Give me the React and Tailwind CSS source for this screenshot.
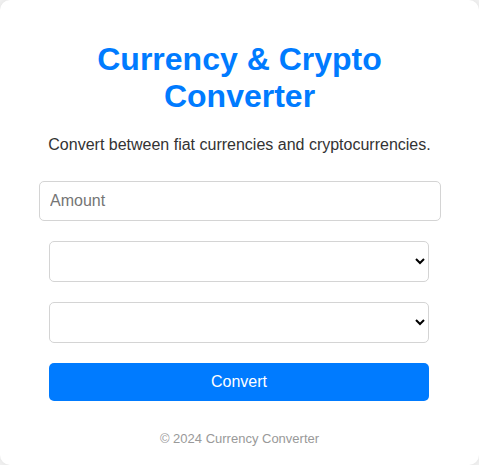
import React from "react";

export default function App() {
  return (
    <div
      className="min-h-[465px] bg-[#f4f4f4] text-[#333]"
      style={{ fontFamily: '"Liberation Sans", Arial, sans-serif' }}
    >
      <div className="h-[465px] w-[479px] rounded-[10px] bg-white px-5 pt-5 text-center shadow-[0_0_10px_rgba(0,0,0,0.1)]">
        <h1 className="mt-[21px] text-[32px] font-bold leading-[36.8px] text-[#007bff]">
          Currency &amp; Crypto
          <br />
          Converter
        </h1>
        <p className="mt-[21px] text-[16px] leading-[18.4px]">
          Convert between fiat currencies and cryptocurrencies.
        </p>
        <input
          type="number"
          placeholder="Amount"
          className="ml-[19px] mt-[27px] block h-10 w-[402px] rounded-[5px] border border-[#d4d4d4] bg-white px-[10px] text-[16px] text-[#333] outline-none placeholder:text-[#757575]"
        />
        <select className="ml-[29px] mt-5 block h-[41px] w-[380px] rounded-[5px] border border-[#d4d4d4] bg-white px-[10px] text-[16px] text-black">
          <option value=""></option>
        </select>
        <select className="ml-[29px] mt-5 block h-[41px] w-[380px] rounded-[5px] border border-[#d4d4d4] bg-white px-[10px] text-[16px] text-black">
          <option value=""></option>
        </select>
        <button className="ml-[29px] mt-5 block h-[38px] w-[380px] rounded-[5px] bg-[#007bff] text-[16px] text-white">
          Convert
        </button>
        <footer className="mt-[30px] text-[13px] leading-[15px] text-[#999]">
          © 2024 Currency Converter
        </footer>
      </div>
    </div>
  );
}
